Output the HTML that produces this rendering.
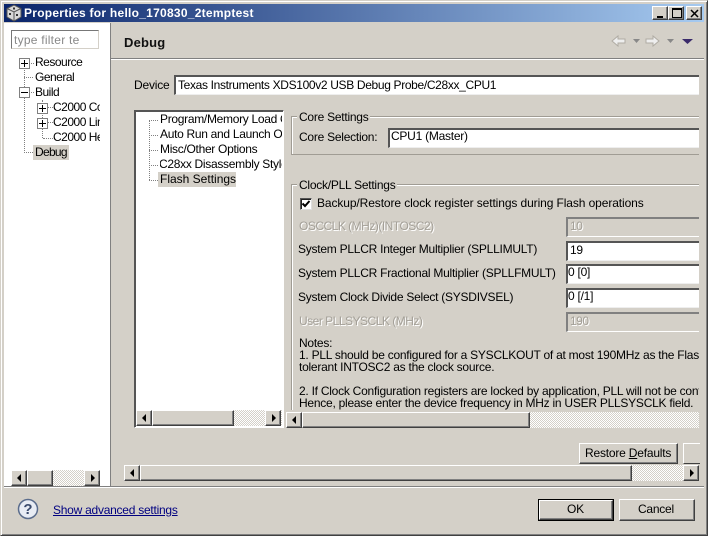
<!DOCTYPE html>
<html><head><meta charset="utf-8"><style>
html,body{margin:0;padding:0}
body{width:708px;height:536px;overflow:hidden;position:relative;background:#d4d0c8;font-family:"Liberation Sans","IPAGothic",sans-serif;font-size:12px;color:#000}
div,span.t{position:absolute;box-sizing:border-box}
.t{white-space:nowrap;line-height:14px;height:14px;letter-spacing:-.25px}
.g{color:#a4a098;text-shadow:1px 1px 0 #fff;letter-spacing:-.5px}
.in{background:#fff;border-top:2px solid #555;border-left:2px solid #555;border-bottom:1px solid #eee;overflow:hidden}
.dis{background:#d4d0c8;border-top:2px solid #808080;border-left:2px solid #808080;border-bottom:1px solid #fff}
.bt{background:#d4d0c8;border:1px solid;border-color:#fff #404040 #404040 #fff;box-shadow:inset -1px -1px 0 #808080}
.hatch{background:repeating-conic-gradient(#d4d0c8 0 25%,#fff 0 50%) 0 0/2px 2px}
.al,.ar{width:0;height:0;border-top:4px solid transparent;border-bottom:4px solid transparent}
.al{border-right:4px solid #000;left:5px;top:3px}
.ar{border-left:4px solid #000;left:6px;top:3px}
.gb{border:1px solid #a09c94;border-right:none;box-shadow:inset 1px 1px 0 #fff}
.lg{background:#d4d0c8;padding:0 2px;line-height:14px;white-space:nowrap}
.pm{width:11px;height:11px;border:1px solid #808080;background:#fff}
.pm:before{content:"";position:absolute;left:1px;top:4px;width:7px;height:1px;background:#000}
.pl:after{content:"";position:absolute;left:4px;top:1px;width:1px;height:7px;background:#000}
.dh{border-top:1px dotted #808080;height:1px}
.dv{border-left:1px dotted #808080;width:1px}
.tr{letter-spacing:-.5px}
.tb{letter-spacing:-.3px}
</style></head><body>
<!-- window frame -->
<div style="left:0;top:0;width:708px;height:536px;border:1px solid;border-color:#d4d0c8 #404040 #404040 #d4d0c8;box-shadow:inset 1px 1px 0 #fff,inset -1px -1px 0 #808080"></div>
<div style="left:4px;top:4px;width:700px;height:18px;background:linear-gradient(90deg,#0a246a,#a6caf0)"></div>
<svg style="position:absolute;left:5px;top:4px" width="18" height="18" viewBox="0 0 18 18"><path d="M9 1L16 4.500V13L9 17L2 13V4.500Z" fill="#d8d8d8" stroke="#555"/><path d="M2 4.500L9 8L16 4.500M9 8V17" fill="none" stroke="#555"/><rect x="4" y="9" width="2" height="2" fill="#333"/><rect x="11" y="10" width="2" height="2" fill="#333"/><rect x="8" y="3.500" width="2" height="2" fill="#333"/></svg>
<span class="t" style="left:24px;top:6px;color:#fff;font-weight:bold;letter-spacing:.26px">Properties for hello_170830_2temptest</span>
<div class="bt" style="left:652px;top:6px;width:16px;height:14px"><div style="left:4px;top:9px;width:6px;height:2px;background:#000"></div></div>
<div class="bt" style="left:668px;top:6px;width:16px;height:14px"><div style="left:3px;top:1px;width:10px;height:10px;border:1px solid #000;border-top-width:2px"></div></div>
<div class="bt" style="left:686px;top:6px;width:16px;height:14px"><svg style="position:absolute;left:3px;top:2px" width="9" height="9"><path d="M1 1L8 8M8 1L1 8" stroke="#000" stroke-width="1.500"/></svg></div>
<!-- left panel -->
<div style="left:4px;top:23px;width:106px;height:463px;background:#fff"></div>
<div style="left:110px;top:23px;width:1px;height:463px;background:#808080"></div>
<div style="left:4px;top:486px;width:700px;height:1px;background:#808080"></div>
<div style="left:4px;top:487px;width:700px;height:1px;background:#fff"></div>
<div style="left:11px;top:30px;width:88px;height:19px;border:1px solid;border-color:#777 #d4d0c8 #d4d0c8 #777;background:#fff"></div>
<span class="t" style="left:14px;top:33px;color:#888;letter-spacing:.25px;width:84px;overflow:hidden">type filter te</span>
<div class="dv" style="left:24px;top:66px;height:87px"></div>
<div class="dh" style="left:24px;top:77px;width:9px"></div>
<div class="dh" style="left:24px;top:152px;width:9px"></div>
<div class="dh" style="left:29px;top:63px;width:5px"></div>
<div class="dh" style="left:29px;top:92px;width:5px"></div>
<div class="pm pl" style="left:19px;top:58px"></div>
<div class="pm" style="left:19px;top:87px"></div>
<div class="dv" style="left:42px;top:100px;height:38px"></div>
<div class="dh" style="left:48px;top:107px;width:5px"></div>
<div class="dh" style="left:48px;top:122px;width:5px"></div>
<div class="dh" style="left:43px;top:138px;width:10px"></div>
<div class="pm pl" style="left:37px;top:103px"></div>
<div class="pm pl" style="left:37px;top:118px"></div>
<span class="t tr" style="left:35px;top:55px">Resource</span>
<span class="t tr" style="left:35px;top:70px">General</span>
<span class="t tr" style="left:35px;top:85px">Build</span>
<div style="left:53px;top:99px;width:47px;height:46px;overflow:hidden"><span class="t tr" style="left:0;top:1px">C2000 Compiler</span><span class="t tr" style="left:0;top:16px">C2000 Linker</span><span class="t tr" style="left:0;top:31px">C2000 Hex</span></div>
<div style="left:33px;top:145px;width:36px;height:15px;background:#d4d0c8"></div>
<span class="t" style="left:35px;top:145px;letter-spacing:-.7px">Debug</span>
<!-- left scrollbar -->
<div class="hatch" style="left:11px;top:470px;width:89px;height:16px"></div>
<div class="bt" style="left:11px;top:470px;width:16px;height:16px"><div class="al"></div></div>
<div class="bt" style="left:27px;top:470px;width:26px;height:16px"></div>
<div class="bt" style="left:84px;top:470px;width:16px;height:16px"><div class="ar"></div></div>
<!-- header -->
<span class="t" style="left:124px;top:36px;font-weight:bold;font-size:13px;letter-spacing:.2px;color:#111">Debug</span>
<div style="left:111px;top:58px;width:593px;height:1px;background:#808080"></div>
<div style="left:111px;top:59px;width:593px;height:1px;background:#fff"></div>
<svg style="position:absolute;left:610px;top:33px" width="90" height="16" viewBox="0 0 90 16"><path d="M2 8L8 3V6H15V10H8V13Z" fill="#eee" stroke="#b0aca4"/><path d="M23 6H30L26.500 10Z" fill="#888"/><path d="M49 8L43 3V6H36V10H43V13Z" fill="#eee" stroke="#b0aca4"/><path d="M57 6H64L60.500 10Z" fill="#888"/><path d="M72 6H83L77.500 11Z" fill="#3a2a6a"/></svg>
<!-- device -->
<span class="t" style="left:134px;top:78px;letter-spacing:-.2px">Device</span>
<div class="in" style="left:174px;top:75px;width:525px;height:20px"></div>
<span class="t" style="left:178px;top:78px;letter-spacing:-.34px">Texas Instruments XDS100v2 USB Debug Probe/C28xx_CPU1</span>
<!-- tree box -->
<div style="left:134px;top:110px;width:150px;height:318px;background:#fff;border:1px solid;border-color:#555 #fff #fff #555;box-shadow:inset 1px 1px 0 #555"></div>
<div class="dv" style="left:149px;top:120px;height:60px"></div>
<div class="dh" style="left:149px;top:120px;width:9px"></div>
<div class="dh" style="left:149px;top:135px;width:9px"></div>
<div class="dh" style="left:149px;top:150px;width:9px"></div>
<div class="dh" style="left:149px;top:165px;width:9px"></div>
<div class="dh" style="left:149px;top:180px;width:9px"></div>
<div style="left:158px;top:172px;width:78px;height:15px;background:#d4d0c8"></div>
<div style="left:160px;top:111px;width:122px;height:76px;overflow:hidden">
<span class="t tb" style="left:0;top:1px">Program/Memory Load Options</span>
<span class="t tb" style="left:0;top:16px">Auto Run and Launch Options</span>
<span class="t tb" style="left:0;top:31px">Misc/Other Options</span>
<span class="t tb" style="left:-1px;top:46px">C28xx Disassembly Style</span>
<span class="t" style="left:0;top:61px;letter-spacing:0">Flash Settings</span>
</div>
<div class="hatch" style="left:136px;top:410px;width:146px;height:16px"></div>
<div class="bt" style="left:136px;top:410px;width:16px;height:16px"><div class="al"></div></div>
<div class="bt" style="left:152px;top:410px;width:82px;height:16px"></div>
<div class="bt" style="left:265px;top:410px;width:16px;height:16px"><div class="ar"></div></div>
<!-- core settings -->
<div class="gb" style="left:291px;top:116px;width:408px;height:39px"></div>
<span class="t lg" style="left:297px;top:110px">Core Settings</span>
<span class="t" style="left:299px;top:130px">Core Selection:</span>
<div class="in" style="left:388px;top:128px;width:311px;height:20px"></div>
<span class="t" style="left:391px;top:129px">CPU1 (Master)</span>
<!-- clock settings -->
<div class="gb" style="left:291px;top:184px;width:408px;height:226px;border-bottom:none;box-shadow:inset 1px 1px 0 #fff"></div>
<span class="t lg" style="left:297px;top:178px">Clock/PLL Settings</span>
<div style="left:300px;top:198px;width:12px;height:12px;background:#fff;border:1px solid;border-color:#555 #ddd #ddd #555;box-shadow:inset 1px 1px 0 #222"></div>
<svg style="position:absolute;left:300px;top:198px" width="12" height="12"><path d="M2.500 5.500L5 8L9.500 3" fill="none" stroke="#000" stroke-width="2"/></svg>
<span class="t" style="left:317px;top:196px;letter-spacing:-.1px">Backup/Restore clock register settings during Flash operations</span>
<span class="t g" style="left:299px;top:219px">OSCCLK (MHz)(INTOSC2)</span>
<div class="dis" style="left:566px;top:217px;width:133px;height:20px"></div>
<span class="t g" style="left:570px;top:219px">10</span>
<span class="t" style="left:298px;top:242px">System PLLCR Integer Multiplier (SPLLIMULT)</span>
<div class="in" style="left:566px;top:241px;width:133px;height:20px"></div>
<span class="t" style="left:570px;top:243px">19</span>
<span class="t" style="left:298px;top:266px">System PLLCR Fractional Multiplier (SPLLFMULT)</span>
<div class="in" style="left:566px;top:264px;width:133px;height:20px"></div>
<span class="t" style="left:568px;top:265px">0 [0]</span>
<span class="t" style="left:298px;top:290px">System Clock Divide Select (SYSDIVSEL)</span>
<div class="in" style="left:566px;top:288px;width:133px;height:20px"></div>
<span class="t" style="left:568px;top:289px">0 [/1]</span>
<span class="t g" style="left:299px;top:314px">User PLLSYSCLK (MHz)</span>
<div class="dis" style="left:566px;top:312px;width:133px;height:20px"></div>
<span class="t g" style="left:570px;top:314px">190</span>
<div style="left:299px;top:336px;width:400px;height:74px;overflow:hidden">
<span class="t" style="left:0;top:0">Notes:</span>
<span class="t" style="left:0;top:12px">1. PLL should be configured for a SYSCLKOUT of at most 190MHz as the Flash requires</span>
<span class="t" style="left:0;top:24px">tolerant INTOSC2 as the clock source.</span>
<span class="t" style="left:0;top:48px">2. If Clock Configuration registers are locked by application, PLL will not be configured</span>
<span class="t" style="left:0;top:60px">Hence, please enter the device frequency in MHz in USER PLLSYSCLK field.</span>
</div>
<div class="hatch" style="left:287px;top:412px;width:412px;height:16px"></div>
<div class="bt" style="left:286px;top:412px;width:16px;height:16px"><div class="al"></div></div>
<div class="bt" style="left:302px;top:412px;width:228px;height:16px"></div>
<!-- buttons -->
<div class="bt" style="left:579px;top:443px;width:99px;height:21px"></div>
<span class="t" style="left:585px;top:446px;letter-spacing:-.2px">Restore <u>D</u>efaults</span>
<div class="bt" style="left:683px;top:443px;width:17px;height:21px;border-right:none;box-shadow:none"></div>
<!-- main scroll -->
<div class="hatch" style="left:124px;top:465px;width:575px;height:16px"></div>
<div class="bt" style="left:124px;top:465px;width:16px;height:16px"><div class="al"></div></div>
<div class="bt" style="left:140px;top:465px;width:492px;height:16px"></div>
<div class="bt" style="left:683px;top:465px;width:16px;height:16px"><div class="ar"></div></div>
<!-- footer -->
<svg style="position:absolute;left:17px;top:498px" width="22" height="22" viewBox="0 0 22 22"><circle cx="11" cy="11" r="9.500" fill="#e8ecf4" stroke="#5a6c8c" stroke-width="1.500"/><text x="11" y="16" font-family="Liberation Sans" font-weight="bold" font-size="15" text-anchor="middle" fill="#3a4a6c">?</text></svg>
<span class="t" style="left:53px;top:503px;color:#000080;text-decoration:underline">Show advanced settings</span>
<div style="left:538px;top:499px;width:76px;height:22px;border:1px solid #000"></div>
<div class="bt" style="left:539px;top:500px;width:74px;height:20px"></div>
<span class="t" style="left:567px;top:502px">OK</span>
<div class="bt" style="left:619px;top:499px;width:76px;height:22px"></div>
<span class="t" style="left:638px;top:502px">Cancel</span>
</body></html>
